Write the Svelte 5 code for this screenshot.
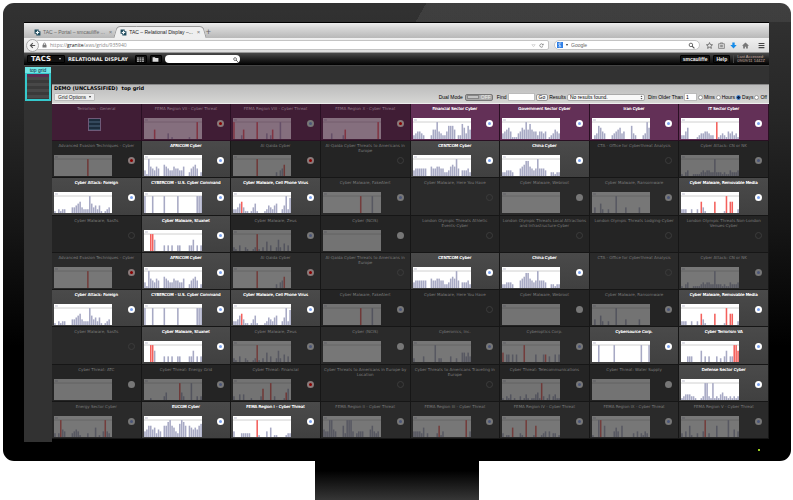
<script>
  // Each chart string holds 30 slots: 0-9 is a grey bar height, a-i is a red bar of height 1-9.
  const C = {
    fema7: '00000e000000301000000001000i00',
    fema8: 'i0002e000000i0000302e000900000',
    fema10: '00003000002e0000000000000000i0',
    financial: '234432000255943224777502286375',
    government: '345641113465958544244340123543',
    iran: '023764300023456340007320002396',
    it: '224600001233443220i12321434231',
    evasion: '00000000000000000i000000000000',
    africom: '319543540065433544335002456402',
    qaida: '000000000000i0000000002034f000',
    centcom: '344444400544554422356594033342',
    china: '223332000456885434944430022122',
    cnnk: '102300111123233229222121132223',
    foreign: '102122000334563222953424101230',
    cybercom: '900090000090000009000000000999',
    phone: '2235f3110135100012432450024928',
    fakealert: '0000000000000000000i0000090000',
    empty: '000000000000000000000000000000',
    ransom: '030052002000900003000000300000',
    removable: '2220020020f310000f00001i0ff002',
    stuxnet: '000ii6000030303003300003360303',
    zeus: '210300210012i10205030026204030',
    cyberonics: '200003000009022000030020055353',
    cyberoptics: 'e0440404000i0000040004d0300404',
    cybersource: '000900000009000000000000090009',
    terrorism: '000333000060303000302036033iif',
    energygrid: '000100000024000000i42000900202',
    threatfin: '200303000100002f000i0200001d60',
    telecom: '10213010020131011341i201302311',
    defense: '123332210012992191213422121212',
    energysector: '202i4300023431000200050103i320',
    eucom: '346645243066896532798606545467',
    fema1: '300022222000i10003050110000122',
    fema2: '433994300062999302333000463230',
    fema3: '3333250200002f1300000000000i03',
    fema4: '20110e000210i0001f001230302201',
    fema9: '1009i0600003530600000203021320',
    fema5: '203061002003i02000600000900403'
  };

  const cell = (title, chart, dot = 'blue', on = false, tone = '') => ({ title, chart, dot, on, tone });
  const on = (title, chart, tone = '') => cell(title, chart, 'blue', true, tone);
  const none = (title) => cell(title, null, 'none');

  const techniques = [
    cell('Advanced Evasion Techniques - Cyber', C.evasion, 'red'),
    on('AFRICOM Cyber', C.africom),
    cell('Al Qaida Cyber', C.qaida, 'red'),
    none('Al-Qaida Cyber Threats to Americans in\nEurope'),
    on('CENTCOM Cyber', C.centcom),
    on('China Cyber', C.china),
    none('CTA - Office for Cyberthreat Analysis'),
    cell('Cyber Attack: CN or NK', C.cnnk)
  ];
  const malware = [
    on('Cyber Attack: Foreign', C.foreign),
    on('CYBERCOM - U.S. Cyber Command', C.cybercom),
    on('Cyber Malware, Cell Phone Virus', C.phone),
    cell('Cyber Malware, FakeAlert', C.fakealert),
    none('Cyber Malware, Here You Have'),
    cell('Cyber Malware, Webroot', C.empty, 'grey'),
    cell('Cyber Malware, Ransomware', C.ransom),
    on('Cyber Malware, Removable Media', C.removable)
  ];
  const worms = [
    none('Cyber Malware, Sasfis'),
    on('Cyber Malware, Stuxnet', C.stuxnet),
    cell('Cyber Malware, Zeus', C.zeus),
    cell('Cyber (NCIS)', C.empty, 'grey')
  ];

  const rows = [
    [
      cell('Terrorism - General', 'grid', '', false, 'plum'),
      cell('FEMA Region VII - Cyber Threat', C.fema7, 'red', false, 'plum'),
      cell('FEMA Region VIII - Cyber Threat', C.fema8, 'blue', false, 'plum'),
      cell('FEMA Region X - Cyber Threat', C.fema10, 'red', false, 'plum'),
      on('Financial Sector Cyber', C.financial, 'plum'),
      on('Government Sector Cyber', C.government, 'plum'),
      on('Iran Cyber', C.iran, 'plum'),
      on('IT Sector Cyber', C.it, 'plum')
    ],
    techniques,
    malware,
    [
      ...worms,
      none('London Olympic Threats Athletic\nEvents-Cyber'),
      none('London Olympic Threats Local Attractions\nand Infrastructure-Cyber'),
      none('London Olympic Threats Lodging-Cyber'),
      none('London Olympic Threats Non-London\nVenues-Cyber')
    ],
    techniques,
    malware,
    [
      ...worms,
      cell('Cyberonics, Inc.', C.cyberonics),
      cell('Cyberoptics Corp.', C.cyberoptics),
      on('Cybersource Corp.', C.cybersource),
      on('Cyber Terrorism VA', C.terrorism)
    ],
    [
      cell('Cyber Threat: ATC', C.empty, 'grey'),
      cell('Cyber Threat: Energy Grid', C.energygrid),
      cell('Cyber Threat: Financial', C.threatfin, 'red'),
      none('Cyber Threats to Americans in Europe by\nLocation'),
      none('Cyber Threats to Americans Traveling in\nEurope'),
      cell('Cyber Threat: Telecommunications', C.telecom),
      cell('Cyber Threat: Water Supply', C.empty, 'grey'),
      on('Defense Sector Cyber', C.defense)
    ],
    [
      cell('Energy Sector Cyber', C.energysector),
      on('EUCOM Cyber', C.eucom),
      on('FEMA Region I - Cyber Threat', C.fema1),
      cell('FEMA Region II - Cyber Threat', C.fema2),
      cell('FEMA Region III - Cyber Threat', C.fema3),
      cell('FEMA Region IV - Cyber Threat', C.fema4),
      cell('FEMA Region IX - Cyber Threat', C.fema9),
      cell('FEMA Region V - Cyber Threat', C.fema5)
    ]
  ];

  const bars = (s) =>
    [...s]
      .map((ch, i) => ({ i, red: ch >= 'a', h: ch >= 'a' ? ch.charCodeAt(0) - 96 : +ch }))
      .filter((b) => b.h > 0);

  let unit = $state('Days');
  const units = ['Mins', 'Hours', 'Days', 'Off'];
</script>

{#snippet favicon()}
  <svg class="fav" viewBox="0 0 12 12" aria-hidden="true">
    <path d="M1 1h7v3h3v7H4V8H1z" fill="#1d4a5c" />
    <path d="M5 3h2v2h2v2H7v2H5V7H3V5h2z" fill="#f2f7f8" />
  </svg>
{/snippet}

<div class="monitor">
  <div class="screen">
    <nav class="tabs" aria-label="Browser tabs">
      <a class="tab" href="#portal">{@render favicon()}<span>TAC – Portal – smcauliffe ...</span><i>×</i></a>
      <a class="tab current" href="#display">{@render favicon()}<span>TAC – Relational Display –...</span><i>×</i></a>
      <button class="plus" aria-label="New tab">+</button>
    </nav>

    <div class="address">
      <button class="back" aria-label="Back">
        <svg viewBox="0 0 12 12"><path d="M6.500 2 2.500 6l4 4M3 6h7.500" fill="none" stroke="#555" stroke-width="2" /></svg>
      </button>
      <div class="field url">
        <svg class="lock" viewBox="0 0 10 12"><path d="M3 6V4a2 2 0 0 1 4 0v2" fill="none" stroke="#777" stroke-width="1.500" /><path d="M1 5.500h8V11H1z" fill="#777" /></svg>
        <span class="link">https://<b>granite</b>/aws/grids/935940</span>
        <svg class="ico small" viewBox="0 0 12 12"><path d="M2 4h8L6 9z" fill="none" stroke="#aaa" /></svg>
        <svg class="ico small" viewBox="0 0 12 12"><path d="M9.500 8A4 4 0 1 1 9 3.500" fill="none" stroke="#666" stroke-width="1.600" /><path d="M10.800 1v4.500H6.500z" fill="#666" /></svg>
      </div>
      <div class="field find">
        <svg class="g" viewBox="0 0 12 12"><path d="M0 0h12v12H0z" fill="#2f7fe6" /><path d="M8.500 2H5.800a2 2 0 1 0 .6 3.800c-1.500 1.200.9 1.300 1.300 2.500.3 1.300-3.700 2.300-4 .4 0-1.200 1.400-1.500 2.600-1.500" fill="none" stroke="#fff" stroke-width="1.300" /></svg>
        <span class="caret"></span>
        <input aria-label="Web search" placeholder="Google" />
        <svg class="ico" viewBox="0 0 12 12"><circle cx="5" cy="5" r="3" fill="none" stroke="#555" stroke-width="1.500" /><path d="m7 7 4 4" stroke="#555" stroke-width="2" /></svg>
      </div>
      <svg class="ico" viewBox="0 0 12 12"><path d="m6 1 1.500 3.400 3.700.4-2.800 2.400.8 3.700L6 9l-3.200 1.900.8-3.700L.8 4.800l3.700-.4z" fill="none" stroke="#555" stroke-width="1.300" /></svg>
      <svg class="ico" viewBox="0 0 12 12"><path d="M1 3h10v8H1zM4 3V1.500h4V3M4 5v4M6 5v4M8 5v4" fill="none" stroke="#777" stroke-width="1.300" /></svg>
      <svg class="ico" viewBox="0 0 12 12"><path d="M4 1h4v4h3.500L6 11 .5 5H4z" fill="#178be8" /></svg>
      <svg class="ico" viewBox="0 0 12 12"><path d="M6 1 0 6.500h2V11h3V8h2v3h3V6.500h2z" fill="#777" /></svg>
      <svg class="ico menu" viewBox="0 0 12 12"><path d="M1 2.500h10M1 6h10M1 9.500h10" stroke="#444" stroke-width="2" /></svg>
    </div>

    <header class="bar">
      <button class="logo">TACS <small></small></button>
      <h1>RELATIONAL DISPLAY</h1>
      <button class="tool" aria-label="Grids"><svg viewBox="0 0 12 8"><path d="M0 1.500h12M0 4.500h12M0 7h12" stroke="#ddd" stroke-width="1.600" stroke-dasharray="3.300 1" /></svg></button>
      <button class="tool" aria-label="Folders"><svg viewBox="0 0 12 8"><path d="M1 0h4l1 1.500h5V8H1z" fill="#ddd" /></svg></button>
      <label class="search">
        <input aria-label="Search" />
        <svg viewBox="0 0 12 12"><circle cx="5" cy="5" r="3.400" fill="none" stroke="#222" stroke-width="1.400" /><path d="m7.500 7.500 4 4" stroke="#222" stroke-width="2" /></svg>
      </label>
      <button class="pill">smcauliffe</button>
      <button class="pill">Help</button>
      <p class="seen">Last Accessed:<br />09/09/11 1442Z</p>
    </header>

    <main>
      <aside>
        <a class="thumb" href="#top"><span>top grid</span><i></i></a>
      </aside>
      <section>
        <div class="head">
          <div class="names">
            <h2>DEMO (UNCLASSIFIED) <span>top grid</span></h2>
            <button class="options">Grid Options <span class="caret"></span></button>
          </div>
          <form class="controls" onsubmit={(e) => e.preventDefault()}>
            <span>Dual Mode</span>
            <button type="button" class="toggle" role="switch" aria-checked="false" aria-label="Dual Mode"><i></i>OFF</button>
            <label for="q">Find</label>
            <input id="q" class="box q" />
            <button class="go">Go</button>
            <label for="r">Results</label>
            <span class="pick"><select id="r"><option>No results found.</option></select><svg viewBox="0 0 6 10"><path d="m3 1 2 3H1zM3 9l2-3H1z" fill="#555" /></svg></span>
            <label for="d">Dim Older Than</label>
            <input id="d" class="box d" value="1" />
            {#each units as u}
              <label class="unit"><input type="radio" name="unit" value={u} bind:group={unit} />{u}</label>
            {/each}
          </form>
        </div>

        <div class="grid">
          {#each rows as row, r}
            {#each row as c}
              <article class={['cell', c.on && 'on', c.tone, r % 2 === 0 && 'even']}>
                <h3>{c.title}</h3>
                <div class="body">
                  {#if c.chart === 'grid'}
                    <span class="mini"></span>
                  {:else}
                    {#if c.chart}
                      <svg class="chart" viewBox="0 0 60 21" preserveAspectRatio="none" role="img" aria-label={c.title}>
                        <rect width="60" height="21" fill="#fff" />
                        <path d="M0 4h60" stroke="#bbb" stroke-width=".7" />
                        <path d="M1 2h3" stroke="#bbc" />
                        {#each bars(c.chart) as b}
                          <rect x={b.i * 2 + 0.2} y={21 - b.h * 1.88} width="1.6" height={b.h * 1.88} fill={b.red ? '#f4605c' : '#a7a9c4'} />
                        {/each}
                      </svg>
                    {/if}
                    <span class={['dot', c.dot]}></span>
                  {/if}
                </div>
              </article>
            {/each}
          {/each}
        </div>
      </section>
    </main>
  </div>
  <div class="chin"><i></i></div>
</div>
<div class="stand"></div>

<style>
  :global(body) {
    background: #fff;
    font-family: 'Liberation Sans', Arial, sans-serif;
    font-size: 5px;
    line-height: 6px;
    color: #222;
  }
  * { box-sizing: border-box; }
  h1, h2, h3, p { margin: 0; }
  button, input, select { font: inherit; color: inherit; padding: 0; margin: 0; border: 0; background: none; }
  a { color: inherit; text-decoration: none; }
  i { font-style: normal; }

  .monitor {
    margin: 3px 2px 0 3px;
    padding: 19px 22px 0 21px;
    border-radius: 11px;
    background:
      linear-gradient(120deg, transparent 0 53%, #fff1 53%) top / 100% 19px no-repeat,
      linear-gradient(#323232, #262626 25%, #151515 50%, #000 75%);
  }
  .screen { border-top: 1px solid #000; }

  .tabs {
    display: flex;
    align-items: flex-end;
    height: 15px;
    padding-left: 8px;
    background: linear-gradient(#ececec, #d8d8d8 30%, #b8b8b8);
  }
  .tab { display: flex; align-items: center; gap: 2px; height: 12px; padding: 0 2px; color: #666; white-space: nowrap; }
  .tab.current {
    position: relative;
    z-index: 0;
    margin-left: 4px;
    color: #222;
  }
  .tab.current::before, .tab.current::after {
    content: '';
    position: absolute;
    z-index: -1;
    inset: 0 20px 0 -3px;
    background: #efefef;
    border-radius: 4px 0 0 0;
    border: solid #999;
    border-width: 1px 0 0 1px;
    transform: skewX(-16deg);
  }
  .tab.current::after { inset: 0 -3px 0 20px; border-radius: 0 4px 0 0; border-width: 1px 1px 0 0; transform: skewX(16deg); }
  .fav { width: 7px; height: 7px; flex: none; }
  .tab i { margin-left: 2px; font-size: 6px; color: #777; }
  .plus { width: 12px; height: 12px; font-size: 9px; color: #666; }

  .address {
    display: flex;
    align-items: center;
    gap: 5px;
    height: 15px;
    padding: 0 4px 0 2px;
    background: linear-gradient(#f0f0f0, #dcdcdc);
    border-bottom: 1px solid #999;
  }
  .back {
    position: relative;
    display: grid;
    place-items: center;
    width: 13px;
    height: 13px;
    margin-right: -8px;
    border: 1px solid #aaa;
    border-radius: 50%;
    background: #f4f4f4;
  }
  .back svg { width: 7px; height: 7px; }
  .field { display: flex; align-items: center; gap: 3px; height: 10px; padding: 0 4px; background: #fff; border: 1px solid #c4c4c4; border-radius: 2px; }
  .url { flex: 1; padding-left: 5px; }
  .link { flex: 1; color: #888; font-family: 'Open Sans', sans-serif; }
  .link b { font-weight: 400; color: #111; }
  .lock { width: 5px; height: 6px; }
  .find { width: 146px; border-radius: 5px; padding-left: 2px; }
  .find input { flex: 1; min-width: 0; outline: 0; }
  .find input::placeholder { color: #666; }
  .g { width: 6px; height: 6px; }
  .ico { width: 7px; height: 7px; flex: none; }
  .find + .ico { margin-left: 1px; }
  .ico.small { width: 5px; height: 5px; }
  .ico.menu { margin-left: 4px; }
  .caret { display: inline-block; border: 1px solid transparent; border-top: 2px solid #333; border-bottom: 0; }

  .bar {
    display: flex;
    align-items: center;
    gap: 3px;
    height: 12px;
    padding-left: 3px;
    background: linear-gradient(#4a4a4a, #222 50%, #000);
    color: #eee;
  }
  .bar button { height: 8px; background: #111; border: 1px solid #000; border-radius: 1px; }
  .bar .logo { display: flex; align-items: center; gap: 4px; width: 38px; padding: 0 3px; font: bold 7px/6px 'DejaVu Sans', sans-serif; }
  .logo small { margin-left: auto; border: 1px solid transparent; border-top: 2px solid #ddd; }
  h1 { font: bold 5px/6px 'DejaVu Sans', sans-serif; margin-right: 4px; }
  .bar .tool { display: grid; place-items: center; width: 12px; }
  .tool svg { width: 7px; height: 5px; }
  .search { display: flex; align-items: center; width: 75px; height: 8px; padding-right: 2px; border-radius: 4px; background: #fff; margin-right: auto; }
  .search input { flex: 1; min-width: 0; outline: 0; color: #111; }
  .search svg { width: 5px; height: 5px; }
  .bar .pill { padding: 0 2px; font-weight: 700; }
  .seen { padding: 0 4px 0 3px; border-left: 1px solid #444; font-size: 4px; line-height: 4px; color: #c5aaa0; }

  main { display: flex; background: #323232; border-top: 1px solid #444; }
  aside { width: 28px; padding: 1px; }
  .thumb { display: block; padding: 0 1px 1px; border: 1px solid #35c9cc; background: #35c9cc; height: 34px; }
  .thumb span { display: block; margin: -1px -2px 0; background: #70e4e4; color: #123; text-align: center; }
  .thumb i { display: block; height: 25px; margin-top: 1px; background: linear-gradient(#5c2c50 0 3px, transparent 3px), repeating-linear-gradient(#3a3a3a 0 3px, #484848 3px 6px); }
  section { flex: 1; min-width: 0; margin-top: 18px; padding-bottom: 3px; background: #000; }

  .head {
    display: flex;
    justify-content: space-between;
    align-items: flex-end;
    height: 20px;
    padding: 2px 2px;
    background: linear-gradient(#bcbcbc, #d6d6d4);
    border-top: 1px solid #888;
    border-bottom: 1px solid #eee;
  }
  .names { display: flex; flex-direction: column; align-items: flex-start; gap: 1px; }
  h2 { font: bold 5px/7px 'DejaVu Sans', sans-serif; color: #000; }
  h2 span { margin-left: 2px; }
  .options { display: flex; align-items: center; gap: 3px; height: 8px; padding: 0 3px; background: #eee; border: 1px solid #bbb; border-radius: 1px; }
  .controls { display: flex; align-items: center; gap: 1px; color: #000; white-space: nowrap; }
  .toggle { display: flex; align-items: center; gap: 2px; width: 28px; height: 7px; padding: 0 1px; background: #a9a9a9; border: 1px solid #777; border-radius: 2px; color: #eee; margin: 0 3px 0 1px; }
  .toggle i { width: 12px; height: 4px; background: #c4c4c4; border: 1px solid #888; }
  .box { height: 8px; background: #fff; border: 1px solid #bbb; padding: 0 1px; }
  .q { width: 27px; }
  .d { width: 13px; }
  .go { height: 7px; padding: 0 2px; background: #f4f4f4; border: 1px solid #999; border-radius: 2px; line-height: 5px; }
  .pick { position: relative; display: flex; margin-right: 2px; }
  .pick select { width: 78px; height: 7px; padding: 0 2px; appearance: none; background: #f8f8f8; border: 1px solid #aaa; border-radius: 2px; line-height: 5px; }
  .pick svg { position: absolute; right: 2px; top: 1px; width: 3px; height: 5px; pointer-events: none; }
  .unit { display: flex; align-items: center; gap: 1px; }
  .unit input { appearance: none; width: 5px; height: 5px; border: 1px solid #999; border-radius: 50%; background: #fff; }
  .unit input:checked { background: #124; border: 1px solid #4a90e0; }

  .grid { display: grid; grid-template-columns: repeat(8, 1fr); grid-template-rows: repeat(9, 1fr); min-height: 335px; }
  .cell {
    display: flex;
    flex-direction: column;
    min-height: 37px;
    padding: 2px 2px 1px;
    background: #242424;
    border: solid #161616;
    border-width: 0 1px 1px 0;
    color: #7c7c7c;
  }
  .cell.even { background: #2a2a2a; }
  .cell.plum { background: #401d35; color: #927888; border-color: #2a1023; }
  .cell.on { background: linear-gradient(#4a4a4a, #404040); color: #fff; }
  .cell.on.plum { background: #633057; }
  h3 { height: 12px; font: 4px/5px 'DejaVu Sans', Verdana, sans-serif; text-align: center; white-space: pre; }
  .on h3 { text-shadow: 0 0 0 #fff; }
  .body { display: flex; align-items: flex-start; justify-content: space-between; padding-right: 4px; height: 21px; }
  .chart { flex: 0 1 72%; height: 21px; opacity: .36; }
  .on .chart { opacity: 1; }
  .mini { width: 13px; height: 13px; margin: 0 auto; border: 1px solid #6e5a78; background: repeating-linear-gradient(#1c2c3c 0 2px, #34485c 2px 4px); }
  .dot { flex: none; width: 7px; height: 7px; margin: 2px 0 0 auto; border-radius: 50%; border: 2px solid #777; background: #4b5678; }
  .on .dot { border-color: #fff; background: #7ba2ee; }
  .dot.red { border-color: #8a7a7a; background: #800; }
  .dot.grey { background: #777; }
  .dot.none { border: 1px solid #3c3c3c; background: none; }

  .chin { display: flex; justify-content: flex-end; height: 19px; padding: 7px 9px; }
  .chin i { width: 2px; height: 2px; background: #9c2; }
  .stand { width: 164px; height: 39px; margin: 0 auto; background: linear-gradient(#000 25%, #363636); }
</style>
